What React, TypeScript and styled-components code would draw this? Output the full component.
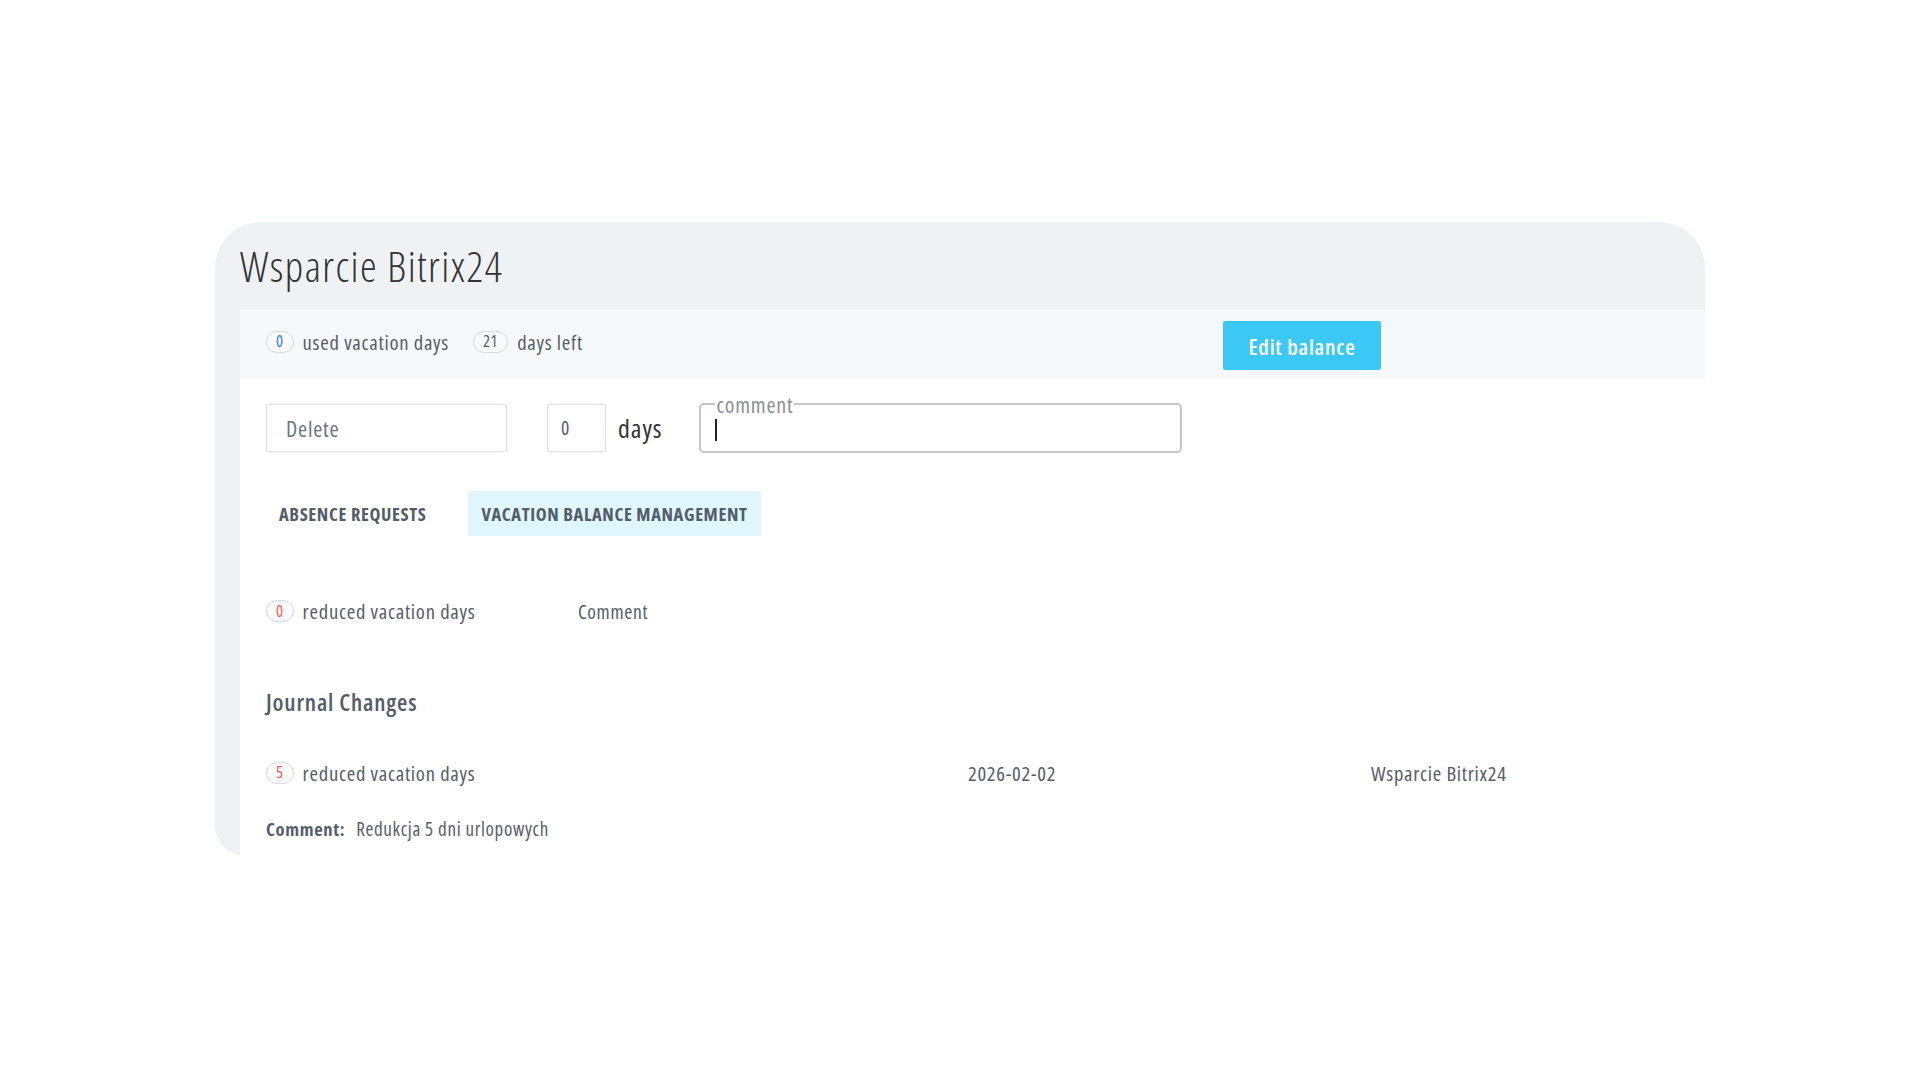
import styled, { createGlobalStyle } from "styled-components";

const GlobalStyle = createGlobalStyle`
  html, body {
    margin: 0;
    padding: 0;
    background: #ffffff;
  }
  body {
    font-family: "Open Sans", "Noto Sans", sans-serif;
    font-stretch: 75%;
  }
  * {
    letter-spacing: 0.035em;
  }
`;

const Page = styled.div`
  padding: 222px 0 0 215px;
  width: 1490px;
`;

const Card = styled.div`
  background: #eef2f4;
  border-radius: 46px 46px 0 30px;
  padding-left: 25px;
`;

const Header = styled.div`
  height: 88px;
  display: flex;
  align-items: center;
`;

const Title = styled.h1`
  margin: 0;
  font-size: 42px;
  font-weight: 300;
  color: #333333;
  line-height: 1;
`;

const Content = styled.div`
  background: #ffffff;
  padding-bottom: 14px;
`;

const StatStrip = styled.div`
  height: 68px;
  background: #f5f9fb;
  padding-left: 26px;
  display: grid;
  grid-template-columns: 957px auto;
  align-items: center;
`;

const Stats = styled.div`
  display: flex;
  align-items: center;
  gap: 24px;
  margin-bottom: 5px;
`;

const Stat = styled.div`
  display: flex;
  align-items: center;
  gap: 9px;
  font-size: 20.6px;
  color: #555e6b;
`;

const Badge = styled.span<{ $tone: "blue" | "red" | "gray" }>`
  min-width: 27px;
  height: 22px;
  padding: 0 9px;
  box-sizing: border-box;
  border: 1px solid #d5dade;
  border-radius: 11px;
  background: #f9fafb;
  display: inline-flex;
  align-items: center;
  justify-content: center;
  font-size: 16.5px;
  line-height: 1;
  color: ${(p) =>
    p.$tone === "blue" ? "#2f80d1" : p.$tone === "red" ? "#ff5752" : "#535c69"};
`;

const EditButton = styled.button`
  width: 158px;
  height: 49px;
  margin-top: 3px;
  border: none;
  border-radius: 2px;
  background: #3bc8f5;
  color: #ffffff;
  font-family: inherit;
  font-stretch: 75%;
  font-size: 22px;
  font-weight: 600;
  cursor: pointer;
`;

const FormRow = styled.div`
  display: flex;
  align-items: center;
  padding: 25px 0 0 26px;
  height: 49px;
`;

const TextBox = styled.input<{ $width: number }>`
  width: ${(p) => p.$width}px;
  height: 48px;
  box-sizing: border-box;
  border: 1px solid #dcdfe3;
  border-radius: 2px;
  padding: 0 ${(p) => (p.$width > 100 ? 19 : 13)}px;
  font-family: inherit;
  font-stretch: 75%;
  font-size: ${(p) => (p.$width > 100 ? 22 : 19.5)}px;
  color: #535c69;
  outline: none;
  &::placeholder {
    color: #6a737f;
  }
`;

const DaysLabel = styled.span`
  margin: 0 37px 0 12px;
  font-size: 26px;
  color: #333333;
`;

const CommentBox = styled.fieldset`
  width: 483px;
  height: 57px;
  box-sizing: border-box;
  margin: -7px 0 0 0;
  padding: 0 14px;
  border: 2px solid #c6c6c6;
  border-radius: 5px;
  display: flex;
  align-items: center;
`;

const CommentLegend = styled.legend`
  padding: 0 1px;
  font-size: 22px;
  line-height: 16px;
  color: #8a8f96;
`;

const Caret = styled.span`
  width: 1.5px;
  height: 22px;
  margin-top: -2px;
  background: #222222;
`;

const Tabs = styled.div`
  display: flex;
  gap: 29px;
  padding: 39px 0 0 26px;
`;

const Tab = styled.div<{ $active?: boolean }>`
  height: 45px;
  padding: 0 13px;
  display: flex;
  align-items: center;
  background: ${(p) => (p.$active ? "#dff6fd" : "transparent")};
  font-size: 18.4px;
  font-weight: 700;
  text-transform: uppercase;
  color: #535c69;
`;

const ReducedRow = styled.div`
  display: grid;
  grid-template-columns: 312px auto;
  align-items: center;
  padding: 61px 0 0 26px;
`;

const SmallText = styled.span`
  font-size: 19.5px;
  color: #535c69;
`;

const SectionTitle = styled.h2`
  margin: 66px 0 0 26px;
  font-size: 23.6px;
  font-weight: 600;
  color: #535c69;
  line-height: 1;
`;

const JournalRow = styled.div`
  display: grid;
  grid-template-columns: 702px 403px auto;
  align-items: center;
  padding: 44px 0 0 26px;
`;

const JournalCell = styled.span`
  font-size: 20.5px;
  color: #555e6b;
`;

const CommentLine = styled.div`
  display: flex;
  gap: 11px;
  align-items: baseline;
  padding: 29px 0 0 26px;
  font-size: 19px;
  color: #555e6b;
`;

const CommentKey = styled.span`
  font-weight: 700;
  font-size: 18.5px;
`;

export default function App() {
  return (
    <>
      <GlobalStyle />
      <Page>
        <Card>
          <Header>
            <Title>Wsparcie Bitrix24</Title>
          </Header>
          <Content>
            <StatStrip>
              <Stats>
                <Stat>
                  <Badge $tone="blue">0</Badge>
                  used vacation days
                </Stat>
                <Stat>
                  <Badge $tone="gray">21</Badge>
                  days left
                </Stat>
              </Stats>
              <EditButton>Edit balance</EditButton>
            </StatStrip>

            <FormRow>
              <TextBox $width={241} placeholder="Delete" readOnly />
              <TextBox $width={59} style={{ marginLeft: 40 }} defaultValue="0" />
              <DaysLabel>days</DaysLabel>
              <CommentBox>
                <CommentLegend>comment</CommentLegend>
                <Caret />
              </CommentBox>
            </FormRow>

            <Tabs>
              <Tab>Absence requests</Tab>
              <Tab $active>Vacation balance management</Tab>
            </Tabs>

            <ReducedRow>
              <Stat>
                <Badge $tone="red">0</Badge>
                reduced vacation days
              </Stat>
              <SmallText>Comment</SmallText>
            </ReducedRow>

            <SectionTitle>Journal Changes</SectionTitle>

            <JournalRow>
              <Stat>
                <Badge $tone="red">5</Badge>
                reduced vacation days
              </Stat>
              <JournalCell>2026-02-02</JournalCell>
              <JournalCell>Wsparcie Bitrix24</JournalCell>
            </JournalRow>

            <CommentLine>
              <CommentKey>Comment:</CommentKey>
              <span>Redukcja 5 dni urlopowych</span>
            </CommentLine>
          </Content>
        </Card>
      </Page>
    </>
  );
}
